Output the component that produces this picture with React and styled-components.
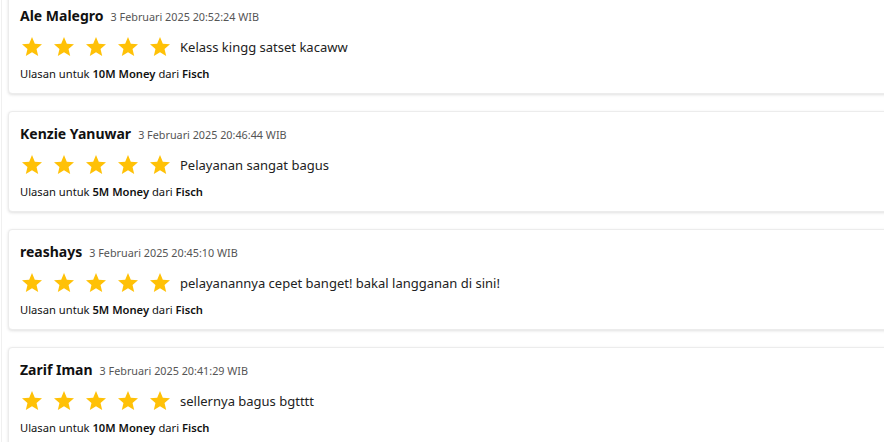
import React from "react";
import styled, { createGlobalStyle } from "styled-components";

const Global = createGlobalStyle`
  html, body { margin: 0; padding: 0; background: #ffffff; }
  body { font-family: "Noto Sans", "Open Sans", sans-serif; color: #111; overflow: hidden; }
`;

const Page = styled.div`
  margin-left: 1px;
  border-left: 1px solid #f0f0f0;
`;

const List = styled.div`
  display: flex;
  flex-direction: column;
  gap: 17px;
  margin-top: -7px;
  padding-left: 6px;
  margin-right: -20px;
`;

const Card = styled.div`
  background: #fff;
  border: 1px solid #ececec;
  border-radius: 4px;
  box-shadow: 0 1px 3px rgba(0, 0, 0, 0.12);
  padding: 12px 11px 11px 11px;
  height: 101px;
  box-sizing: border-box;
  display: flex;
  flex-direction: column;
`;

const Header = styled.div`
  display: flex;
  align-items: baseline;
  gap: 7px;
  height: 20px;
`;

const Name = styled.span`
  font-size: 14px;
  font-weight: 700;
  color: #111;
`;

const DateText = styled.span`
  font-size: 10.8px;
  color: #555;
`;

const RatingRow = styled.div`
  display: flex;
  align-items: center;
  gap: 8px;
  margin-top: 9px;
  height: 24px;
`;

const Stars = styled.div`
  display: flex;
  gap: 8px;
`;

const Comment = styled.span`
  font-size: 13px;
  color: #222;
`;

const Footer = styled.div`
  margin-top: 7px;
  font-size: 11.2px;
  color: #111;
  b { font-weight: 600; }
`;

const Star = () => (
  <svg width="24" height="24" viewBox="0 0 24 24">
    <path
      fill="#FFC107"
      d="M12 17.27L18.18 21l-1.64-7.03L22 9.24l-7.19-.61L12 2 9.19 8.63 2 9.24l5.46 4.73L5.82 21z"
    />
  </svg>
);

const reviews = [
  { name: "Ale Malegro", date: "3 Februari 2025 20:52:24 WIB", text: "Kelass kingg satset kacaww", item: "10M Money" },
  { name: "Kenzie Yanuwar", date: "3 Februari 2025 20:46:44 WIB", text: "Pelayanan sangat bagus", item: "5M Money" },
  { name: "reashays", date: "3 Februari 2025 20:45:10 WIB", text: "pelayanannya cepet banget! bakal langganan di sini!", item: "5M Money" },
  { name: "Zarif Iman", date: "3 Februari 2025 20:41:29 WIB", text: "sellernya bagus bgtttt", item: "10M Money" },
];

export default function App() {
  return (
    <>
      <Global />
      <Page>
        <List>
          {reviews.map((r) => (
            <Card key={r.name}>
              <Header>
                <Name>{r.name}</Name>
                <DateText>{r.date}</DateText>
              </Header>
              <RatingRow>
                <Stars>
                  {[0, 1, 2, 3, 4].map((i) => (
                    <Star key={i} />
                  ))}
                </Stars>
                <Comment>{r.text}</Comment>
              </RatingRow>
              <Footer>
                Ulasan untuk <b>{r.item}</b> dari <b>Fisch</b>
              </Footer>
            </Card>
          ))}
        </List>
      </Page>
    </>
  );
}
